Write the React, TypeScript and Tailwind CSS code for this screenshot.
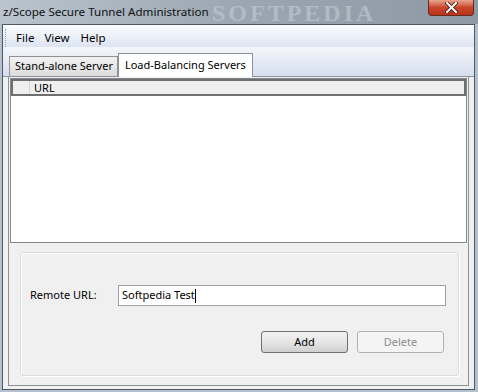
import React from "react";

export default function App() {
  const font = { fontFamily: '"Noto Sans", "Open Sans", sans-serif' };
  return (
    <div className="w-[478px] h-[392px] relative overflow-hidden bg-[#b4c1cd] text-[11px] text-black" style={font}>
      {/* title bar */}
      <div className="h-[24px] flex items-center pl-[3px] bg-gradient-to-r from-[#b9c4ce] via-[#9aa6b1] to-[#8d99a5] relative">
        <span className="absolute left-[212px] top-[1px] text-[24px] font-bold tracking-[3px] text-[#c3ccd5] opacity-60 leading-none" style={{ fontFamily: '"Liberation Serif", serif' }}>SOFTPEDIA</span>
        <span className="relative text-[11.6px] text-[#111] leading-none">z/Scope Secure Tunnel Administration</span>
        <div className="absolute right-[4px] top-0 w-[46px] h-[16px] rounded-b-[4px] border border-[#6b2a20] border-t-0 bg-gradient-to-b from-[#e8a590] via-[#c9452c] to-[#b73418] flex items-center justify-center">
          <svg width="13" height="11" viewBox="0 0 13 11">
            <path d="M2 1 L11 10 M11 1 L2 10" stroke="#3a1a14" strokeWidth="3.6" strokeLinecap="square" />
            <path d="M2 1 L11 10 M11 1 L2 10" stroke="#ffffff" strokeWidth="2" strokeLinecap="square" />
          </svg>
        </div>
      </div>
      {/* client area */}
      <div className="absolute left-[2px] top-[24px] w-[473px] h-[366px] border border-[#4f5964] bg-[#f0f0f0] flex flex-col">
        {/* menu bar */}
        <div className="h-[22px] flex items-center pt-[3px] bg-gradient-to-b from-[#fcfdfe] to-[#dce4f1] relative">
          <div className="ml-[2px] w-[2px] h-[18px] border-l border-dotted border-[#9aa4b0]" />
          <span className="ml-[9px] text-[11.5px]">File</span>
          <span className="ml-[10px] text-[11.5px]">View</span>
          <span className="ml-[11px] text-[11.5px]">Help</span>
        </div>
        {/* tab strip */}
        <div className="h-[30px] flex items-end pl-[6px] bg-gradient-to-b from-[#f4f6fa] to-[#d6deef] border-b border-[#8e9298] relative">
          <div className="h-[20px] pl-[5px] pr-[4px] flex items-center border border-[#8e9298] border-b-0 bg-gradient-to-b from-[#f2f2f2] to-[#dcdcdc]">
            Stand-alone Server
          </div>
          <div className="h-[24px] px-[6px] flex items-center border border-[#8e9298] border-b-0 bg-white -mb-[1px] relative z-10">
            Load-Balancing Servers
          </div>
        </div>
        {/* tab page */}
        <div className="flex-1 flex flex-col mx-[5px] mb-[3px] border-x border-b border-[#8e9298] bg-[#f0f0f0]">
          <div className="mx-[1px] mt-[1px] h-[165px] border border-[#828790] bg-white flex flex-col">
            <div className="h-[17px] flex bg-[#efefef] border-2 border-[#6f6f6f]">
              <div className="w-[17px] border-r border-[#d5d5d5]" />
              <div className="pl-[4px] flex items-center leading-none">URL</div>
            </div>
          </div>
          <div className="flex-1 pl-[11px] pr-[9px] pt-[9px]">
            <div className="h-[124px] rounded-[3px] border border-[#dcdcdc] shadow-[inset_1px_1px_0_#fff,1px_1px_0_#fff] flex flex-col">
              <div className="mt-[32px] flex items-center pl-[9px]">
                <span className="w-[88px]">Remote URL:</span>
                <div className="w-[328px] h-[21px] border border-[#a0a0a0] bg-white flex items-center pl-[3px]">
                  Softpedia Test<span className="w-[1px] h-[14px] bg-black" />
                </div>
              </div>
              <div className="mt-[25px] flex justify-end pr-[14px] gap-[9px]">
                <div className="w-[87px] h-[22px] rounded-[3px] border border-[#707070] bg-gradient-to-b from-[#f2f2f2] via-[#e6e6e6] to-[#cfcfcf] flex items-center justify-center">Add</div>
                <div className="w-[87px] h-[22px] rounded-[3px] border border-[#adb2b5] bg-[#f4f4f4] text-[#8d8d8d] flex items-center justify-center">Delete</div>
              </div>
            </div>
          </div>
        </div>
      </div>
    </div>
  );
}
